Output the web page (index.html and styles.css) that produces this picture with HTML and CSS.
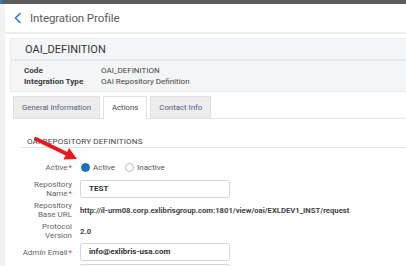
FILE: index.html
```html
<!DOCTYPE html>
<html>
    <head>
        <meta charset="utf-8" />
        <title>Integration Profile</title>
        <link rel="stylesheet" href="styles.css">
    </head>
    <body>
        <div class="topbar"><span class="topbar-mark"></span></div>
        <div class="page">
            <div class="rail"></div>
            <div class="main">
                <div class="header">
                    <svg class="back" width="8" height="12" viewBox="0 0 8 12">
                        <path d="M6.5 1 L1.5 6 L6.5 11" fill="none" stroke="#2f7dc0" stroke-width="1.6" />
                    </svg>
                    <h1>Integration Profile</h1>
                </div>
                <div class="content">
                    <div class="card">
                        <div class="card-title">OAI_DEFINITION</div>
                        <div class="card-info">
                            <div class="info-row"><span class="info-label">Code</span><span>OAI_DEFINITION</span></div>
                            <div class="info-row"><span class="info-label">Integration Type</span><span>OAI Repository Definition</span></div>
                        </div>
                    </div>

                    <div class="tabs">
                        <span class="tab">General Information</span>
                        <span class="tab current">Actions</span>
                        <span class="tab">Contact Info</span>
                    </div>

                    <div class="panel">
                        <div class="section-title">OAI REPOSITORY DEFINITIONS</div>
                        <div class="form">
                            <div class="row">
                                <label class="label">Active<i>*</i></label>
                                <div class="value radios">
                                    <span class="radio checked"></span><span>Active</span>
                                    <span class="radio"></span><span>Inactive</span>
                                </div>
                            </div>
                            <div class="row">
                                <label class="label">Repository<br>Name<i>*</i></label>
                                <div class="value"><span class="input">TEST</span></div>
                            </div>
                            <div class="row">
                                <label class="label">Repository<br>Base URL</label>
                                <div class="value strong">http://il-urm08.corp.exlibrisgroup.com:1801/view/oai/EXLDEV1_INST/request</div>
                            </div>
                            <div class="row">
                                <label class="label">Protocol<br>Version</label>
                                <div class="value strong">2.0</div>
                            </div>
                            <div class="row">
                                <label class="label">Admin Email<i>*</i></label>
                                <div class="value"><span class="input">info@exlibris-usa.com</span></div>
                            </div>
                            <div class="row last">
                                <label class="label">Earliest</label>
                                <div class="value"><span class="input"></span></div>
                            </div>
                        </div>
                    </div>
                </div>
            </div>
        </div>

        <!-- annotation arrow -->
        <svg class="arrow" width="406" height="266" viewBox="0 0 406 266">
            <line x1="36" y1="139" x2="67" y2="154" stroke="#e8191c" stroke-width="4" stroke-linecap="round" />
            <polygon points="77,159 63.5,159.5 69,148" fill="#e8191c" />
        </svg>
    </body>
</html>
```

FILE: styles.css
```css
* {
    margin: 0;
    padding: 0;
    box-sizing: border-box;
}

body {
    font-family: Roboto, "Liberation Sans", sans-serif;
    color: #333;
    background-color: #fff;
    width: 406px;
    height: 266px;
    overflow: hidden;
}

.topbar {
    height: 4px;
    background-color: #5c5c5c;
}

.topbar-mark {
    display: block;
    width: 2px;
    height: 4px;
    background-color: #2f7dc0;
}

.page {
    display: flex;
}

.rail {
    width: 5px;
    flex: none;
    height: 262px;
    background-color: #f1f2f3;
}

.main {
    flex: 1;
}

.header {
    height: 30px;
    display: flex;
    align-items: center;
    padding-left: 9px;
    border-bottom: 2px solid #ececec;
}

.back {
    margin-right: 8px;
}

.header h1 {
    font-size: 11.5px;
    font-weight: normal;
    letter-spacing: -0.1px;
    color: #5a5a5a;
}

.content {
    padding: 4px 0 0 5px;
}

.card {
    background-color: #f3f5f6;
    border: 1px solid #e9ebec;
    border-right: none;
}

.card-title {
    height: 22px;
    line-height: 22px;
    padding-left: 14px;
    font-size: 11px;
    color: #333;
    border-bottom: 2px solid #e7e9ea;
}

.card-info {
    padding: 4px 0 4px 13px;
    font-size: 8px;
    color: #444;
}

.info-row {
    display: flex;
    height: 11px;
    line-height: 11px;
}

.info-label {
    width: 77px;
    font-size: 8.1px;
    font-weight: bold;
    color: #3a3a3a;
}

.tabs {
    display: flex;
    gap: 3px;
    margin: 4px 0 0 3px;
    height: 22px;
}

.tab {
    display: inline-block;
    height: 22px;
    line-height: 22px;
    padding: 0 8px;
    font-size: 7.8px;
    color: #4f5f80;
    background-color: #ececec;
    border: 1px solid #e0e0e0;
    border-bottom: none;
}

.tab.current {
    background-color: #fff;
    color: #444;
    height: 23px;
}

.panel {
    margin-left: 3px;
    border-top: 1px solid #e2e2e2;
    padding: 18px 0 0 7px;
}

.section-title {
    padding-left: 7px;
    height: 11px;
    line-height: 10px;
    font-size: 8px;
    letter-spacing: 0.2px;
    color: #444;
    border-bottom: 1px solid #e6e6e6;
}

.form {
    padding-top: 10px;
}

.row {
    display: flex;
    align-items: center;
    height: 18px;
    margin-bottom: 3px;
}

.row:first-child {
    margin-bottom: 4px;
}

.row.last {
    align-items: flex-start;
}

.label {
    width: 52px;
    flex: none;
    text-align: right;
    font-size: 8px;
    line-height: 9px;
    color: #666;
}

.label i {
    font-style: normal;
    color: #e2333c;
    margin-left: 1px;
}

.value {
    margin-left: 8px;
    font-size: 8px;
    color: #333;
    white-space: nowrap;
}

.strong {
    font-size: 7.7px;
    font-weight: bold;
    color: #444;
}

.radios {
    display: flex;
    align-items: center;
    color: #555;
}

.radio {
    width: 9px;
    height: 9px;
    border-radius: 50%;
    border: 1px solid #b8b8b8;
    background-color: #fff;
    margin-right: 3px;
}

.radio.checked {
    border-color: #1672b8;
    background-color: #1672b8;
    margin-left: 1px;
}

.radios span:nth-child(3) {
    margin-left: 10px;
}

.input {
    display: block;
    width: 150px;
    height: 18px;
    line-height: 16px;
    padding-left: 8px;
    border: 1px solid #d6d6d6;
    border-radius: 2px;
    font-weight: bold;
    color: #333;
}

.arrow {
    position: absolute;
    top: 0;
    left: 0;
    pointer-events: none;
}
```
